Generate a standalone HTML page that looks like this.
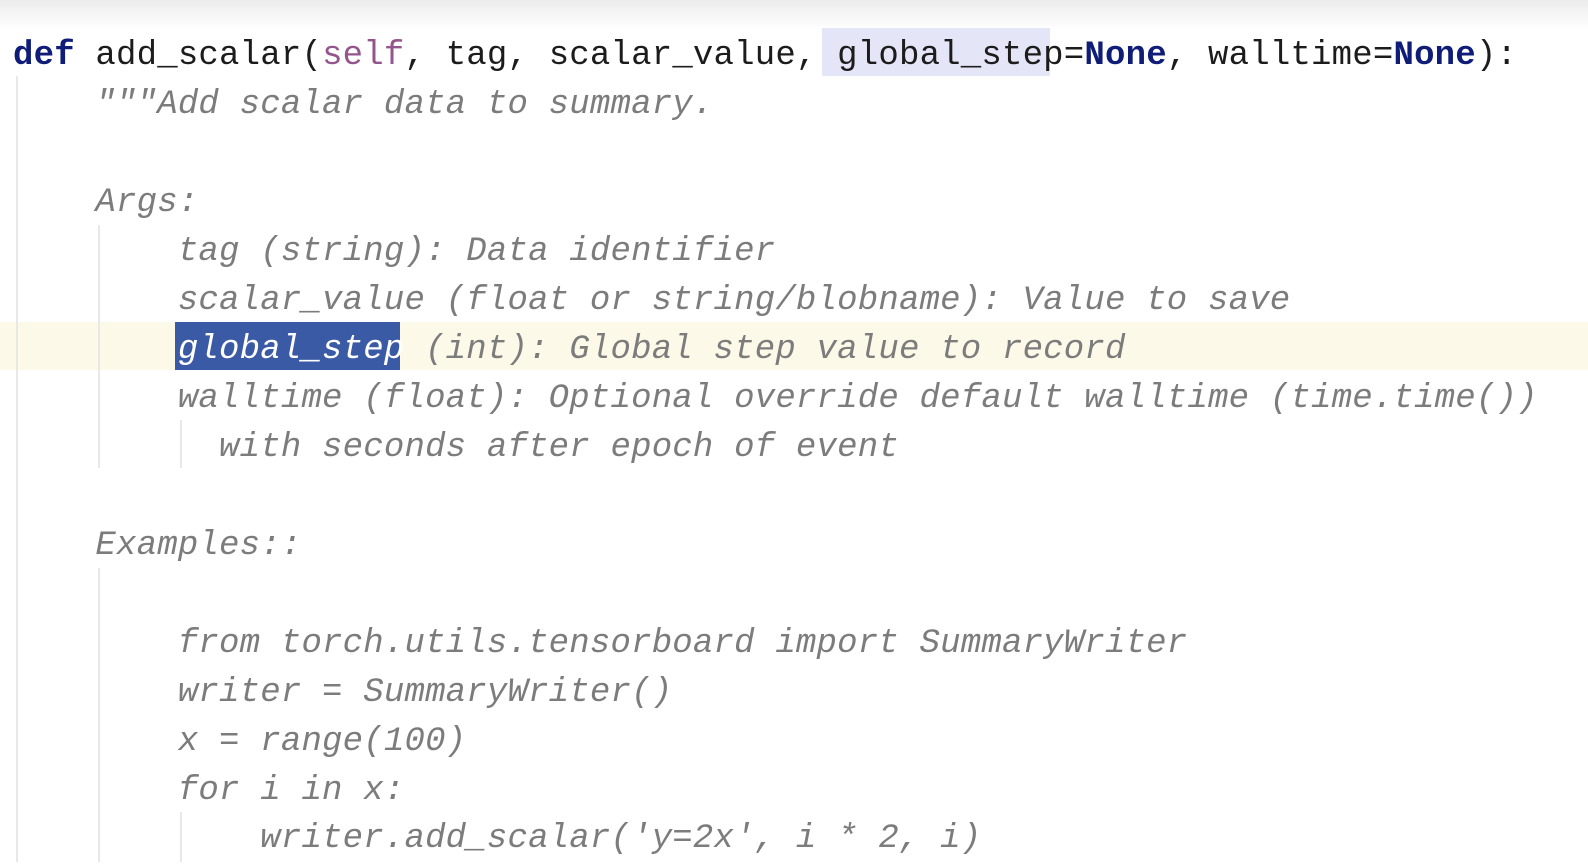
<!DOCTYPE html><html><head><style>
body{margin:0;width:1588px;height:862px;overflow:hidden;background:#fff;position:relative;font-family:"Liberation Mono",monospace;font-size:34px;color:#1c1c1c}
.top{position:absolute;left:0;top:0;width:1588px;height:30px;background:linear-gradient(#ececec,#fff)}
.l{position:absolute;left:13px;height:49px;line-height:49px;white-space:pre;letter-spacing:0.2px}
.d{color:#7c7c7c;font-style:italic}
.k{color:#0f1d78;font-weight:bold}
.s{color:#94558d}
.g{position:absolute;width:2px;background:#e8e8e8}
</style></head><body>
<div class="top"></div>
<div style="position:absolute;left:0;top:322px;width:1588px;height:48px;background:#fdf9e9"></div>
<div style="position:absolute;left:822px;top:28px;width:228px;height:48px;background:#e4e6f7"></div>
<div style="position:absolute;left:175px;top:322px;width:225px;height:48px;background:#3b5aa5"></div>
<div class="g" style="left:16px;top:76px;height:786px"></div>
<div class="g" style="left:98px;top:225px;height:243px"></div>
<div class="g" style="left:98px;top:568px;height:294px"></div>
<div class="g" style="left:180px;top:420px;height:48px"></div>
<div class="g" style="left:180px;top:812px;height:50px"></div>
<div class="l" style="top:32px"><span class="k">def</span> add_scalar(<span class="s">self</span>, tag, scalar_value, global_step=<span class="k">None</span>, walltime=<span class="k">None</span>):</div>
<div class="l d" style="top:81px">    """Add scalar data to summary.</div>
<div class="l d" style="top:179px">    Args:</div>
<div class="l d" style="top:228px">        tag (string): Data identifier</div>
<div class="l d" style="top:277px">        scalar_value (float or string/blobname): Value to save</div>
<div class="l d" style="top:326px">        <span style="color:#fff">global_step</span> (int): Global step value to record</div>
<div class="l d" style="top:375px">        walltime (float): Optional override default walltime (time.time())</div>
<div class="l d" style="top:424px">          with seconds after epoch of event</div>
<div class="l d" style="top:522px">    Examples::</div>
<div class="l d" style="top:620px">        from torch.utils.tensorboard import SummaryWriter</div>
<div class="l d" style="top:669px">        writer = SummaryWriter()</div>
<div class="l d" style="top:718px">        x = range(100)</div>
<div class="l d" style="top:767px">        for i in x:</div>
<div class="l d" style="top:815px">            writer.add_scalar('y=2x', i * 2, i)</div>
</body></html>
